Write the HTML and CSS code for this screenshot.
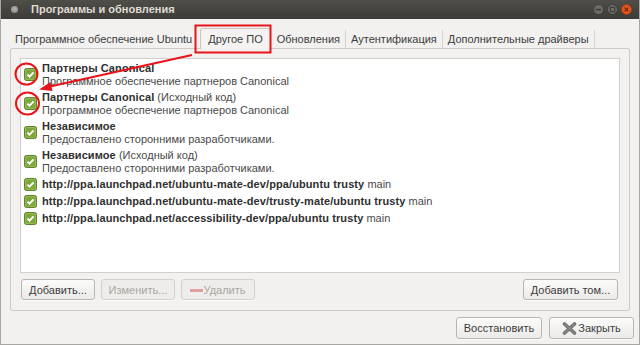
FILE: index.html
```html
<!DOCTYPE html>
<html>
<head>
<meta charset="utf-8">
<link rel="stylesheet" href="styles.css">
</head>
<body>
<div class="window">
  <div class="titlebar">
    <span class="menu-dot"></span>
    <span class="title">Программы и обновления</span>
    <div class="controls">
      <span class="ctl ctl-min"><svg width="11" height="11" viewBox="0 0 11 11"><circle cx="5.5" cy="5.5" r="5" fill="#6d6c68" stroke="#3a3935" stroke-width="0.8"/><rect x="2.8" y="4.9" width="5.4" height="1.4" fill="#3a3935"/></svg></span>
      <span class="ctl ctl-max"><svg width="11" height="11" viewBox="0 0 11 11"><circle cx="5.5" cy="5.5" r="5" fill="#6d6c68" stroke="#3a3935" stroke-width="0.8"/><rect x="3.3" y="3.3" width="4.4" height="4.4" fill="none" stroke="#3a3935" stroke-width="1.1"/></svg></span>
      <span class="ctl ctl-close"><svg width="11" height="11" viewBox="0 0 11 11"><circle cx="5.5" cy="5.5" r="5" fill="#e5561e" stroke="#9c3a12" stroke-width="0.8"/><path d="M3.6 3.6 L7.4 7.4 M7.4 3.6 L3.6 7.4" stroke="#5c2309" stroke-width="1.1"/></svg></span>
    </div>
  </div>

  <div class="content">
    <div class="tabs">
      <div class="tab">Программное обеспечение Ubuntu</div>
      <div class="tab tab-active">Другое ПО</div>
      <div class="tab tab-sep">Обновления</div>
      <div class="tab tab-sep">Аутентификация</div>
      <div class="tab tab-sep">Дополнительные драйверы</div>
    </div>

    <div class="panel">
      <div class="list">
        <div class="row">
          <svg class="check" width="13" height="13" viewBox="0 0 13 13"><rect x="0.5" y="0.5" width="12" height="12" rx="2" fill="#7da63c" stroke="#5d822a"/><rect x="1.5" y="1.5" width="10" height="10" rx="1.5" fill="none" stroke="#9cc25e" stroke-width="0.8"/><path d="M3.4 6.6 L5.5 8.7 L9.6 4.3" fill="none" stroke="#fff" stroke-width="1.9"/></svg>
          <div class="text"><div><b>Партнеры Canonical</b></div><div>Программное обеспечение партнеров Canonical</div></div>
        </div>
        <div class="row">
          <svg class="check" width="13" height="13" viewBox="0 0 13 13"><rect x="0.5" y="0.5" width="12" height="12" rx="2" fill="#7da63c" stroke="#5d822a"/><rect x="1.5" y="1.5" width="10" height="10" rx="1.5" fill="none" stroke="#9cc25e" stroke-width="0.8"/><path d="M3.4 6.6 L5.5 8.7 L9.6 4.3" fill="none" stroke="#fff" stroke-width="1.9"/></svg>
          <div class="text"><div><b>Партнеры Canonical</b> (Исходный код)</div><div>Программное обеспечение партнеров Canonical</div></div>
        </div>
        <div class="row">
          <svg class="check" width="13" height="13" viewBox="0 0 13 13"><rect x="0.5" y="0.5" width="12" height="12" rx="2" fill="#7da63c" stroke="#5d822a"/><rect x="1.5" y="1.5" width="10" height="10" rx="1.5" fill="none" stroke="#9cc25e" stroke-width="0.8"/><path d="M3.4 6.6 L5.5 8.7 L9.6 4.3" fill="none" stroke="#fff" stroke-width="1.9"/></svg>
          <div class="text"><div><b>Независимое</b></div><div>Предоставлено сторонними разработчиками.</div></div>
        </div>
        <div class="row">
          <svg class="check" width="13" height="13" viewBox="0 0 13 13"><rect x="0.5" y="0.5" width="12" height="12" rx="2" fill="#7da63c" stroke="#5d822a"/><rect x="1.5" y="1.5" width="10" height="10" rx="1.5" fill="none" stroke="#9cc25e" stroke-width="0.8"/><path d="M3.4 6.6 L5.5 8.7 L9.6 4.3" fill="none" stroke="#fff" stroke-width="1.9"/></svg>
          <div class="text"><div><b>Независимое</b> (Исходный код)</div><div>Предоставлено сторонними разработчиками.</div></div>
        </div>
        <div class="row row-single">
          <svg class="check" width="13" height="13" viewBox="0 0 13 13"><rect x="0.5" y="0.5" width="12" height="12" rx="2" fill="#7da63c" stroke="#5d822a"/><rect x="1.5" y="1.5" width="10" height="10" rx="1.5" fill="none" stroke="#9cc25e" stroke-width="0.8"/><path d="M3.4 6.6 L5.5 8.7 L9.6 4.3" fill="none" stroke="#fff" stroke-width="1.9"/></svg>
          <div class="text"><b>http://ppa.launchpad.net/ubuntu-mate-dev/ppa/ubuntu trusty</b> main</div>
        </div>
        <div class="row row-single">
          <svg class="check" width="13" height="13" viewBox="0 0 13 13"><rect x="0.5" y="0.5" width="12" height="12" rx="2" fill="#7da63c" stroke="#5d822a"/><rect x="1.5" y="1.5" width="10" height="10" rx="1.5" fill="none" stroke="#9cc25e" stroke-width="0.8"/><path d="M3.4 6.6 L5.5 8.7 L9.6 4.3" fill="none" stroke="#fff" stroke-width="1.9"/></svg>
          <div class="text"><b>http://ppa.launchpad.net/ubuntu-mate-dev/trusty-mate/ubuntu trusty</b> main</div>
        </div>
        <div class="row row-single">
          <svg class="check" width="13" height="13" viewBox="0 0 13 13"><rect x="0.5" y="0.5" width="12" height="12" rx="2" fill="#7da63c" stroke="#5d822a"/><rect x="1.5" y="1.5" width="10" height="10" rx="1.5" fill="none" stroke="#9cc25e" stroke-width="0.8"/><path d="M3.4 6.6 L5.5 8.7 L9.6 4.3" fill="none" stroke="#fff" stroke-width="1.9"/></svg>
          <div class="text"><b>http://ppa.launchpad.net/accessibility-dev/ppa/ubuntu trusty</b> main</div>
        </div>
      </div>

      <div class="list-buttons">
        <button class="btn">Добавить...</button>
        <button class="btn btn-disabled">Изменить...</button>
        <button class="btn btn-disabled btn-remove"><span class="minus"></span>Удалить</button>
        <span class="spacer"></span>
        <button class="btn btn-addvol">Добавить том...</button>
      </div>
    </div>

    <div class="dialog-buttons">
      <button class="btn btn-big btn-revert">Восстановить</button>
      <button class="btn btn-big btn-close"><svg width="15" height="13" viewBox="0 0 15 13"><path d="M2.5 2 L12.5 11 M12.5 2 L2.5 11" stroke="#6e6e6c" stroke-width="3.6" stroke-linecap="round"/><path d="M2.5 2 L12.5 11 M12.5 2 L2.5 11" stroke="#8a8a88" stroke-width="1.6" stroke-linecap="round"/></svg>Закрыть</button>
    </div>
  </div>

  <svg class="annot" width="640" height="345" viewBox="0 0 640 345">
    <rect x="195.5" y="25.5" width="75" height="27" fill="none" stroke="#e8141a" stroke-width="2"/>
    <ellipse cx="26.5" cy="74" rx="11" ry="10.5" fill="none" stroke="#e8141a" stroke-width="2"/>
    <ellipse cx="27.5" cy="103.5" rx="11.5" ry="11" fill="none" stroke="#e8141a" stroke-width="2"/>
    <line x1="192" y1="55" x2="50" y2="86.5" stroke="#e8141a" stroke-width="2"/>
    <polygon points="39,89.5 50.5,82 52.5,91" fill="#e8141a"/>
  </svg>
</div>
</body>
</html>
```
FILE: styles.css
```css
html, body {
  margin: 0;
  padding: 0;
  background: #f2f1f0;
}

.window {
  position: relative;
  width: 640px;
  height: 345px;
  box-sizing: border-box;
  display: flex;
  flex-direction: column;
  background: #f2f1f0;
  border-left: 1px solid #a8a6a1;
  border-right: 1px solid #a8a6a1;
  border-bottom: 1px solid #a8a6a1;
  font-family: "Liberation Sans", Arial, sans-serif;
  font-size: 11px;
  color: #3c3c3c;
  overflow: hidden;
}

/* title bar */
.titlebar {
  height: 19px;
  flex: none;
  display: flex;
  align-items: center;
  background: linear-gradient(#4f4e49, #3c3b37);
  margin: 0 -1px;
  padding: 0 8px 0 10px;
}

.menu-dot {
  width: 7px;
  height: 7px;
  border-radius: 50%;
  background: radial-gradient(circle at 50% 40%, #b5b3ad, #85837e);
  margin-right: 13px;
  margin-left: 1px;
}

.title {
  color: #dfdbd2;
  font-weight: bold;
  font-size: 11px;
  line-height: 19px;
  flex: 1;
}

.controls {
  display: flex;
  gap: 3px;
  margin-right: 0px;
  margin-top: 0;
}

.ctl {
  display: flex;
  width: 11px;
  height: 11px;
}

/* content */
.content {
  flex: 1;
  display: flex;
  flex-direction: column;
  padding: 9px 9px 0 9px;
}

.tabs {
  display: flex;
  align-items: flex-end;
  height: 20px;
  position: relative;
  z-index: 1;
}

.tab {
  height: 20px;
  box-sizing: border-box;
  padding: 5px 5px 0 5px;
  line-height: 13px;
  white-space: nowrap;
  color: #3c3c3c;
}

.tab-sep {
  border-left: 1px solid #d5d2cd;
  height: 18px;
  padding-top: 3px;
  margin-top: 2px;
}

.tab-active {
  height: 21px;
  margin-bottom: -1px;
  margin-left: 3px;
  padding: 4px 7px 0 7px;
  background: #f4f3f2;
  border: 1px solid #c9c6c1;
  border-bottom: none;
  border-radius: 3px 3px 0 0;
}

.tab-active + .tab-sep {
  border-left: none;
  padding-left: 6px;
}

.tabs .tab:last-child {
  border-right: 1px solid #d5d2cd;
}

.panel {
  height: 263px;
  box-sizing: border-box;
  display: flex;
  flex-direction: column;
  border: 1px solid #cdcac5;
  border-radius: 2px;
  background: #f2f1f0;
  padding: 9px 9px 10px 9px;
}

.list {
  flex: 1;
  background: #ffffff;
  border: 1px solid #d2cfca;
  padding-top: 1px;
}

.row {
  display: flex;
  align-items: center;
  gap: 5px;
  padding: 1.5px 0 1.5px 3px;
}

.row-single {
  padding: 2px 0 2px 3px;
}

.check {
  flex: none;
  display: block;
}

.text {
  line-height: 13px;
  color: #4a4a4a;
  white-space: nowrap;
}

.text b {
  color: #2f2f2f;
  font-weight: bold;
  letter-spacing: 0.1px;
}

.list-buttons {
  display: flex;
  gap: 6px;
  margin-top: 6px;
  padding-left: 1px;
  padding-right: 2px;
}

.spacer {
  flex: 1;
}

.btn {
  height: 21px;
  box-sizing: border-box;
  border: 1px solid #b9b6b0;
  border-radius: 3px;
  background: linear-gradient(#fbfbfa, #ebeae8);
  font-family: "Liberation Sans", Arial, sans-serif;
  font-size: 11px;
  color: #3c3c3c;
  padding: 0 7px;
  display: flex;
  align-items: center;
  justify-content: center;
  white-space: nowrap;
  box-shadow: 0 1px 0 rgba(255,255,255,0.8);
}

.list-buttons .btn {
  width: 74px;
}

.list-buttons .btn-addvol {
  width: 95px;
}

.btn-disabled {
  color: #a9a6a1;
  border-color: #d3d0cb;
  background: #eeedeb;
}

.minus {
  display: inline-block;
  width: 13px;
  height: 3px;
  background: #e49c9c;
  margin-right: 1px;
  margin-top: 1px;
}

.btn-remove {
  padding-left: 6px;
}

.dialog-buttons {
  display: flex;
  justify-content: flex-end;
  gap: 7px;
  margin-top: 6px;
  padding-right: -3px;
  margin-right: -4px;
}

.btn-big {
  height: 22px;
}

.btn-revert {
  width: 86px;
}

.btn-close {
  width: 85px;
  gap: 1px;
}

.annot {
  position: absolute;
  left: -1px;
  top: 0;
  pointer-events: none;
  z-index: 5;
}
```
